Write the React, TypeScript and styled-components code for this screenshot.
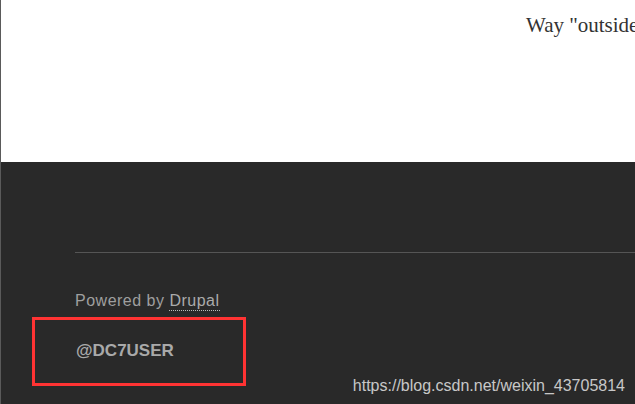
import React from "react";
import styled, { createGlobalStyle } from "styled-components";

const GlobalStyle = createGlobalStyle`
  html, body {
    margin: 0;
    padding: 0;
    height: 100%;
    background: #292929;
    overflow: hidden;
  }
  #root {
    height: 100%;
  }
`;

const Page = styled.div`
  position: relative;
  height: 100%;
  border-left: 1px solid #5a5a5a;
  display: flex;
  flex-direction: column;
  box-sizing: border-box;
`;

const Main = styled.main`
  height: 162px;
  flex: none;
  background: #fff;
  padding: 13px 0 0 525px;
  box-sizing: border-box;
  overflow: hidden;
  white-space: nowrap;
`;

const Lead = styled.p`
  margin: 0;
  font-family: "Liberation Serif", "Times New Roman", serif;
  font-size: 21px;
  line-height: 24px;
  color: #333;
`;

const Footer = styled.footer`
  flex: 1;
  background: #292929;
  padding: 90px 0 0 74px;
  font-family: "Liberation Sans", Arial, sans-serif;
`;

const Divider = styled.hr`
  margin: 0;
  border: 0;
  border-top: 1px solid #555;
`;

const Powered = styled.p`
  margin: 39px 0 0;
  font-size: 16px;
  line-height: 18px;
  color: #9f9f9f;
  letter-spacing: 0.5px;
`;

const FooterLink = styled.a`
  color: #ababab;
  text-decoration: none;
  padding-bottom: 1px;
  border-bottom: 1px dotted #bbb;
`;

const Highlight = styled.div<{ $color: string }>`
  margin: 7px 0 0 -43px;
  width: 214px;
  height: 69px;
  box-sizing: border-box;
  border: 3px solid ${({ $color }) => $color};
  padding: 21px 0 0 41px;
`;

const Handle = styled.span`
  font-size: 17px;
  line-height: 19px;
  font-weight: bold;
  color: #a9a9a9;
`;

const Watermark = styled.span`
  position: absolute;
  right: 10px;
  bottom: 9px;
  font-family: "Liberation Sans", Arial, sans-serif;
  font-size: 16px;
  line-height: 18px;
  color: rgba(230, 230, 230, 0.85);
`;

export default function App() {
  return (
    <>
      <GlobalStyle />
      <Page>
        <Main>
          <Lead>Way "outside" the box</Lead>
        </Main>
        <Footer>
          <Divider />
          <Powered>
            Powered by <FooterLink href="#">Drupal</FooterLink>
          </Powered>
          <Highlight $color="#f33">
            <Handle>@DC7USER</Handle>
          </Highlight>
        </Footer>
        <Watermark>https://blog.csdn.net/weixin_43705814</Watermark>
      </Page>
    </>
  );
}
